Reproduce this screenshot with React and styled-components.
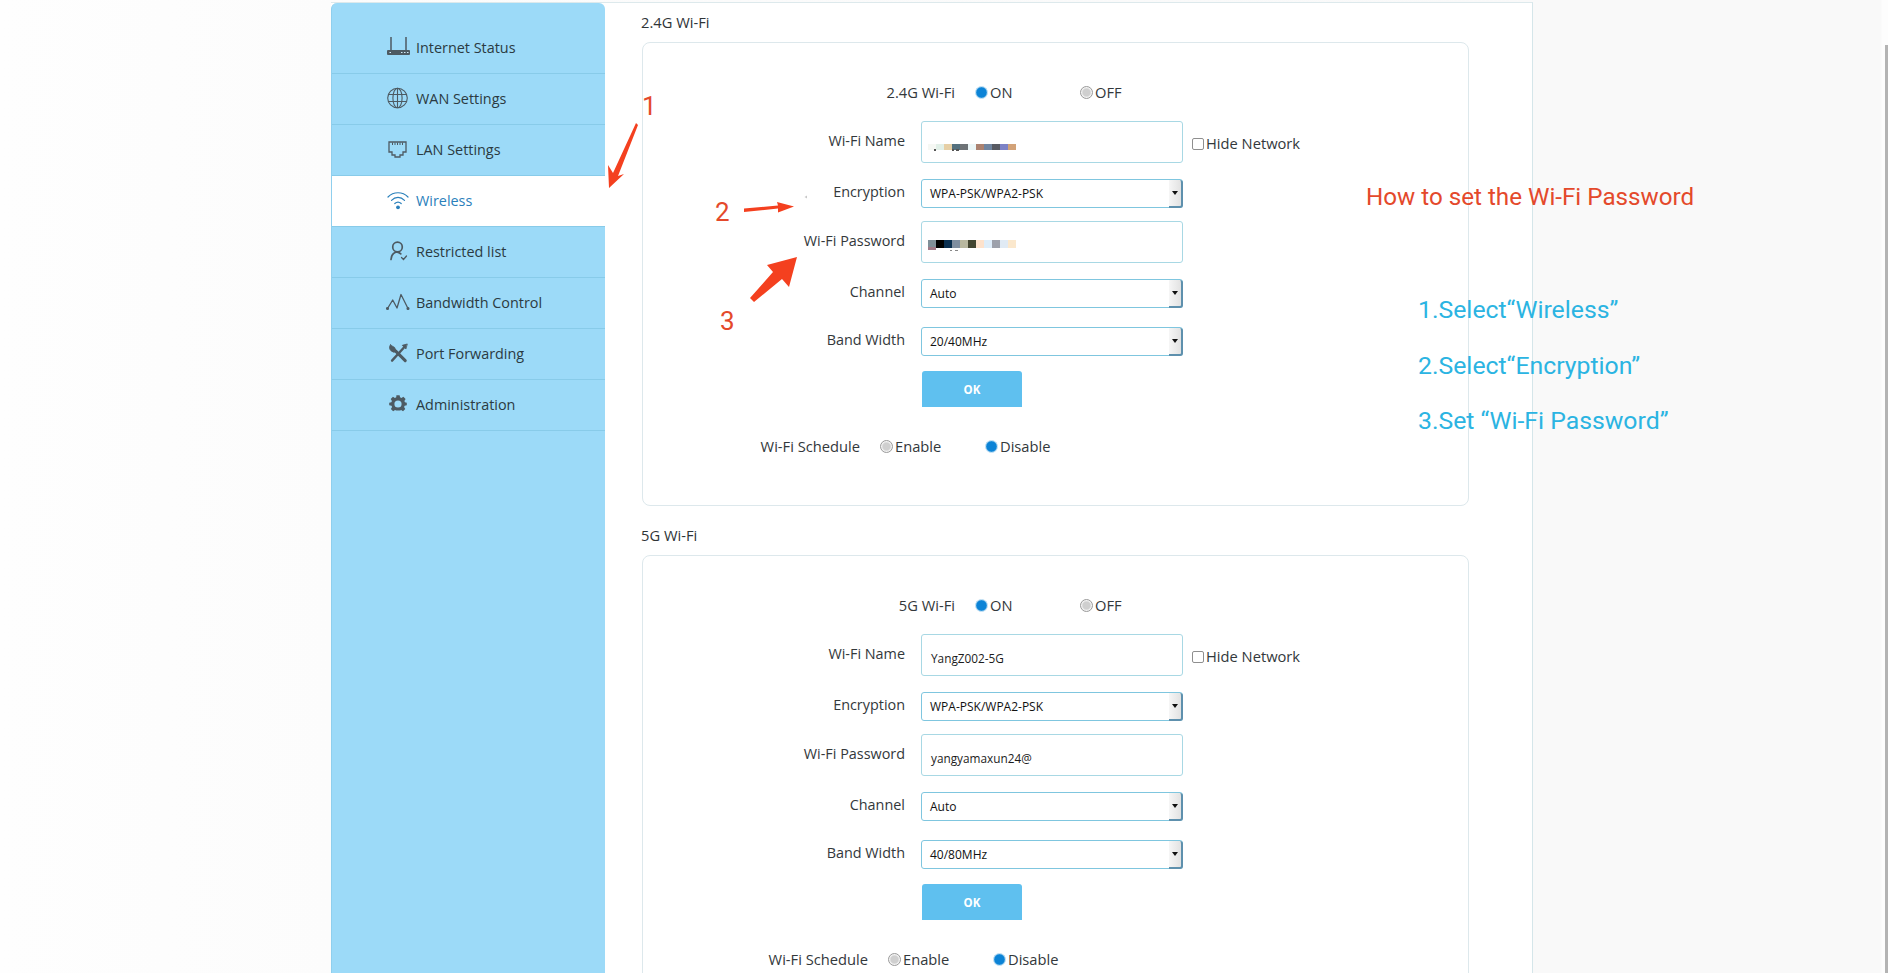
import React from "react";
import styled, { createGlobalStyle } from "styled-components";

const Global = createGlobalStyle`
  html, body { margin: 0; padding: 0; height: 973px; overflow: hidden; background: #fafafa; }
  * { box-sizing: border-box; }
  body { font-family: "Open Sans", "Noto Sans", sans-serif; }
`;

const Page = styled.div`
  position: relative;
  width: 1888px;
  height: 973px;
  overflow: hidden;
  padding: 2px 0 0 331px;
  background: linear-gradient(90deg, #fefefe 0, #fcfcfc 331px, #f9f9f9 1533px, #f9f9f9 1881px, #fdfdfd 1882px);
`;
const Frame = styled.div`
  display: flex;
  width: 1202px;
  height: 971px;
  overflow: hidden;
  background: #fff;
  border-top: 1px solid #dde9ec;
  border-right: 1px solid #d5e6ea;
`;
const Sidebar = styled.nav`
  flex: 0 0 274px;
  padding-top: 20px;
  background: #9cdaf8;
  border-radius: 6px 6px 0 0;
  border-left: 1px solid #8fcfee;
`;
const NavRow = styled.div`
  display: flex;
  align-items: center;
  gap: 6px;
  height: 51px;
  padding: 0 0 2px 54px;
  font-size: 14.4px;
  color: ${p => (p.$active ? "#2a80bb" : "#2b3a42")};
  background: ${p => (p.$active ? "#fff" : "transparent")};
  border-bottom: 1px solid #88cbe9;
`;
const NavIcon = styled.svg`
  flex: 0 0 24px;
  width: 24px;
  height: 24px;
  color: ${p => (p.$active ? "#2a80bb" : "#4d5a62")};
`;
const Content = styled.main`
  flex: 1;
  padding: 7px 0 0 37px;
`;
const Heading = styled.h2`
  margin: 0 0 8px -1px;
  height: 24px;
  font-size: 14.7px;
  font-weight: 400;
  line-height: 24px;
  color: #2f3437;
`;
const Card = styled.section`
  width: 827px;
  margin-bottom: 17px;
  padding: 37px 0 47px;
  border: 1px solid #dde8ec;
  border-radius: 8px;
  background: #fff;
`;
const SwitchRow = styled.div`
  display: flex;
  align-items: center;
  height: 24px;
  margin-top: ${p => p.$top || 0}px;
  font-size: 14.7px;
  color: #33383b;
`;
const SwitchLabel = styled.span`
  flex: 0 0 ${p => p.$w}px;
  margin-right: 20px;
  text-align: right;
  white-space: nowrap;
`;
const RadioOption = styled.span`
  flex: 0 0 105px;
  display: flex;
  align-items: center;
  gap: 2px;
`;
const RadioDot = styled.span`
  flex: 0 0 13px;
  width: 13px;
  height: 13px;
  border-radius: 50%;
  border: ${p => (p.$on ? "1px solid #b5d9f1" : "1px solid #9a9a9a")};
  background: ${p =>
    p.$on
      ? "radial-gradient(circle, #0c83d6 0 4.5px, #4ba7e4 5.5px)"
      : "radial-gradient(circle, #cfcfcf 0 3.5px, #f3f3f3 5px)"};
`;
const FieldRow = styled.div`
  display: grid;
  grid-template-columns: 262px 262px auto;
  column-gap: 16px;
  align-items: center;
  margin-top: ${p => p.$top}px;
`;
const FieldLabel = styled.label`
  padding-bottom: 4px;
  text-align: right;
  font-size: 14.4px;
  color: #33383b;
`;
const TextField = styled.div`
  display: flex;
  align-items: center;
  height: 42px;
  padding: 6px 0 0 ${p => (p.$blur ? 6 : 9)}px;
  border: 1px solid #a8d8e4;
  border-radius: 3px;
  font-size: 11.8px;
  color: #1c1c1c;
`;
const Mosaic = styled.div`
  display: flex;
  margin-bottom: ${p => p.$lift}px;
`;
const MosaicCell = styled.span`
  width: 8px;
  height: ${p => p.$h}px;
  background: ${p => p.$c};
`;
const SelectBox = styled.div`
  position: relative;
  display: flex;
  align-items: center;
  height: 29px;
  padding-left: 8px;
  border: 1px solid #7fc6df;
  border-radius: 3px;
  font-size: 12px;
  color: #111;
`;
const SelectArrow = styled.span`
  position: absolute;
  top: 0;
  right: -1px;
  bottom: -1px;
  width: 14px;
  background: linear-gradient(90deg, #f6f6f6, #e2e2e2);
  border-right: 2px solid #5e90ad;
  border-bottom: 2px solid #5e90ad;
  border-radius: 0 3px 3px 0;
  &::after {
    content: "";
    position: absolute;
    top: 11px;
    left: 3px;
    border: 3px solid transparent;
    border-top: 4px solid #111;
    border-bottom: 0;
  }
`;
const HideNetwork = styled.span`
  display: flex;
  align-items: center;
  gap: 2px;
  margin-left: -7px;
  padding-top: 1px;
  font-size: 14.7px;
  color: #33383b;
`;
const CheckBox = styled.span`
  width: 12px;
  height: 12px;
  margin-top: 2px;
  border: 1px solid #8f8f8f;
  border-radius: 2px;
  background: #fff;
`;
const OkButton = styled.button`
  display: block;
  width: 100px;
  height: 36px;
  margin: 15px 0 0 279px;
  border: 0;
  border-radius: 3px 3px 0 0;
  background: #5fc0ef;
  color: #fff;
  font: 700 11.5px "Open Sans", sans-serif;
`;
const Scrollbar = styled.div`
  position: absolute;
  top: 45px;
  right: 0;
  bottom: 0;
  width: 3px;
  background: #b4b4b4;
`;
const Overlay = styled.svg`
  position: absolute;
  inset: 0;
  width: 1888px;
  height: 973px;
  pointer-events: none;
`;
const Note = styled.div`
  position: absolute;
  left: ${p => p.$x}px;
  top: ${p => p.$y}px;
  font-family: "Roboto", "Liberation Sans", sans-serif;
  font-weight: 400;
  font-size: ${p => p.$size}px;
  line-height: 30px;
  white-space: nowrap;
  color: ${p => p.$color};
`;

const RED = "#e4492b";
const BLUE = "#2bb4e2";

const icons = {
  router: (
    <>
      <path d="M5 2v13M20 2v13" stroke="currentColor" strokeWidth="1.5" fill="none" />
      <rect x="1" y="15" width="23" height="5" rx="1" fill="currentColor" />
      <path d="M3.5 17.5h1.5M15 17.5h1.5M18 17.5h1.5M21 17.5h1.5" stroke="#cfeaf8" strokeWidth="1.2" />
    </>
  ),
  globe: (
    <g fill="none" stroke="currentColor" strokeWidth="1.1">
      <circle cx="11.500" cy="12" r="9.800" />
      <ellipse cx="11.500" cy="12" rx="4.600" ry="9.800" />
      <path d="M11.500 2v20M2.100 8.500h18.800M2.100 15.500h18.800" />
    </g>
  ),
  lan: (
    <g fill="none" stroke="currentColor" strokeWidth="1.300">
      <path d="M3 5h17v10h-3v3h-3v2H9v-2H6v-3H3z" />
      <path d="M6.500 5.500v2.500M9 5.500v2.500M11.500 5.500v2.500M14 5.500v2.500M16.500 5.500v2.500" strokeWidth="1" />
    </g>
  ),
  wifi: (
    <g fill="none" stroke="currentColor" strokeWidth="1.200" strokeLinecap="round">
      <path d="M2 9C7.500 3.300 16.500 3.300 22 9" />
      <path d="M5.500 12.300C9.300 8.500 14.700 8.500 18.500 12.300" />
      <path d="M8.800 15.500c2-1.800 4.400-1.800 6.400 0" />
      <circle cx="12" cy="19.300" r="1.900" fill="currentColor" stroke="none" />
    </g>
  ),
  user: (
    <g fill="none" stroke="currentColor" strokeWidth="1.700" strokeLinecap="round">
      <circle cx="11.500" cy="8" r="4.800" />
      <path d="M5 20.500c0-3.800 2.300-6.500 5.500-7.700 1.800.3 3.300 1 4.300 2" />
      <path d="M15.500 18.500l2 2 3-3.500" strokeWidth="1.300" />
    </g>
  ),
  band: (
    <g fill="none" stroke="currentColor" strokeWidth="1.300" strokeLinecap="round" strokeLinejoin="round">
      <path d="M1.500 18.500L6.700 10 11 18l4-13.500 7 14" />
      <circle cx="1.500" cy="18.500" r=".9" fill="currentColor" />
      <circle cx="22" cy="18.500" r=".9" fill="currentColor" />
    </g>
  ),
  tools: (
    <g fill="none" stroke="currentColor" strokeLinecap="round" transform="translate(1.800 1.800) scale(.85)">
      <path d="M5 21L19 5.500" strokeWidth="2.800" />
      <path d="M22.500 1.500l-5.500 1.500 4 4z" fill="currentColor" strokeWidth="1" />
      <path d="M9 9.500l11.500 11.500" strokeWidth="3.600" />
      <path d="M3 2.500a5 5 0 0 0 1 7 5 5 0 0 0 6 .8L8 5.500 3 2.500z" fill="currentColor" strokeWidth="1" />
    </g>
  ),
  gear: (
    <path
      fill="currentColor"
      fillRule="evenodd"
      d="M10 3h4l.6 2.700 1.700.7 2.400-1.500 2.800 2.800-1.500 2.400.7 1.700L23 12.400v3.200l-2.700.6-.7 1.700 1.500 2.400-2.800 2.800-2.400-1.500-1.300.4h-5l-1.300-.4-2.400 1.500-2.800-2.800 1.500-2.400-.7-1.700L1 15.600v-3.200l2.700-.6.700-1.700-1.500-2.400 2.800-2.800 2.400 1.500 1.700-.7zM12 9.500a4.500 4.500 0 1 0 0 9 4.500 4.500 0 0 0 0-9z"
      transform="translate(2.400 .8) scale(.8)"
    />
  ),
};

const navItems = [
  ["router", "Internet Status"],
  ["globe", "WAN Settings"],
  ["lan", "LAN Settings"],
  ["wifi", "Wireless", true],
  ["user", "Restricted list"],
  ["band", "Bandwidth Control"],
  ["tools", "Port Forwarding"],
  ["gear", "Administration"],
];

const nameBlur = ["#f6f8f4", "#e2f0e8", "#e6cfa5", "#54707e", "#6e7376", "#ebf6f7", "#ab8270", "#7085a0", "#585a62", "#7d82c6", "#d2a278"];
const passBlur = ["#7f8f98", "#000000", "#0a2f50", "#7f8ea0", "#b9b8a0", "#434530", "#fde2cc", "#deedf9", "#9da1ab", "#e0eaf4", "#fbe8cd"];

function Blur({ colors, h, lift }) {
  return (
    <Mosaic $lift={lift}>
      {colors.map((c, i) => (
        <MosaicCell key={i} $c={c} $h={h} />
      ))}
    </Mosaic>
  );
}

function Radio({ on, children }) {
  return (
    <RadioOption>
      <RadioDot $on={on} />
      {children}
    </RadioOption>
  );
}

function Select({ children }) {
  return (
    <SelectBox>
      {children}
      <SelectArrow />
    </SelectBox>
  );
}

function WifiCard({ title, name, password, band, scheduleWidth }) {
  return (
    <>
      <Heading>{title}</Heading>
      <Card>
        <SwitchRow>
          <SwitchLabel $w={312}>{title}</SwitchLabel>
          <Radio on>ON</Radio>
          <Radio>OFF</Radio>
        </SwitchRow>
        <FieldRow $top={17}>
          <FieldLabel>Wi-Fi Name</FieldLabel>
          <TextField $blur={typeof name !== "string"}>{name}</TextField>
          <HideNetwork>
            <CheckBox />
            Hide Network
          </HideNetwork>
        </FieldRow>
        <FieldRow $top={16}>
          <FieldLabel>Encryption</FieldLabel>
          <Select>WPA-PSK/WPA2-PSK</Select>
        </FieldRow>
        <FieldRow $top={13}>
          <FieldLabel>Wi-Fi Password</FieldLabel>
          <TextField $blur={typeof password !== "string"}>{password}</TextField>
        </FieldRow>
        <FieldRow $top={16}>
          <FieldLabel>Channel</FieldLabel>
          <Select>Auto</Select>
        </FieldRow>
        <FieldRow $top={19}>
          <FieldLabel>Band Width</FieldLabel>
          <Select>{band}</Select>
        </FieldRow>
        <OkButton>OK</OkButton>
        <SwitchRow $top={27}>
          <SwitchLabel $w={scheduleWidth}>Wi-Fi Schedule</SwitchLabel>
          <Radio>Enable</Radio>
          <Radio on>Disable</Radio>
        </SwitchRow>
      </Card>
    </>
  );
}

export default function App() {
  return (
    <Page>
      <Global />
      <Frame>
        <Sidebar>
          {navItems.map(([icon, label, active]) => (
            <NavRow key={label} $active={active}>
              <NavIcon viewBox="0 0 24 24" $active={active}>
                {icons[icon]}
              </NavIcon>
              {label}
            </NavRow>
          ))}
        </Sidebar>
        <Content>
          <WifiCard
            title="2.4G Wi-Fi"
            name={<Blur colors={nameBlur} h={6} lift={-4} />}
            password={<Blur colors={passBlur} h={8} lift={2} />}
            band="20/40MHz"
            scheduleWidth={217}
          />
          <WifiCard
            title="5G Wi-Fi"
            name="YangZ002-5G"
            password="yangyamaxun24@"
            band="40/80MHz"
            scheduleWidth={225}
          />
        </Content>
      </Frame>
      <Scrollbar />
      <Overlay viewBox="0 0 1888 973">
        <g fill="#f4401f">
          <path d="M636 123L638 125L618 176L624 174L609 188L608 165L613 173z" />
          <path d="M744 208.500L778 205.500L777 202L794 206.500L778 212.500L778 208.500L744 212z" />
          <path d="M750 298L773 272L767 265L797 257L789 287L782 279L754 302z" />
        </g>
        <path d="M934 149h2v2h-2zM952 149h2v2h-2zM956 149h3v2h-3z" fill="#555" />
        <path d="M928 247h8v3h-8z" fill="#a07a88" />
        <path d="M950 250h2v1h-2zM955 250h3v1h-3z" fill="#888" />
        <path d="M804.500 197l2.500-1.500v3z" fill="#c8c8c8" />
      </Overlay>
      <Note $x={642} $y={91} $size={26} $color={RED}>1</Note>
      <Note $x={715} $y={197} $size={26} $color={RED}>2</Note>
      <Note $x={720} $y={306} $size={26} $color={RED}>3</Note>
      <Note $x={1366} $y={182} $size={24.2} $color={RED}>How to set the Wi-Fi Password</Note>
      <Note $x={1418} $y={295} $size={24.8} $color={BLUE}>1.Select“Wireless”</Note>
      <Note $x={1418} $y={351} $size={24.8} $color={BLUE}>2.Select“Encryption”</Note>
      <Note $x={1418} $y={406} $size={24.8} $color={BLUE}>3.Set “Wi-Fi Password”</Note>
    </Page>
  );
}
